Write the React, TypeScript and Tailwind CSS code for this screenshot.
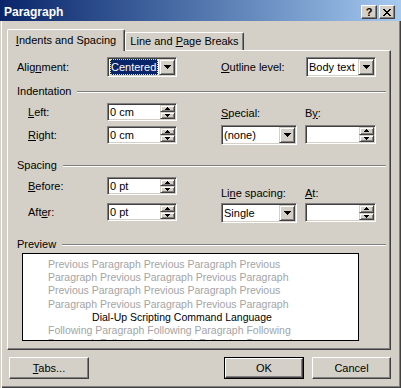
import type { ReactNode } from "react";

const sunken =
  "bg-white border border-t-[#808080] border-l-[#808080] border-r-white border-b-white shadow-[inset_1px_1px_0_#404040,inset_-1px_-1px_0_#d4d0c8]";
const raisedSmall =
  "bg-[#d4d0c8] border border-t-[#d4d0c8] border-l-[#d4d0c8] border-r-[#404040] border-b-[#404040] shadow-[inset_1px_1px_0_#ffffff,inset_-1px_-1px_0_#808080]";
const raisedBtn =
  "bg-[#d4d0c8] border border-t-white border-l-white border-r-[#404040] border-b-[#404040] shadow-[inset_-1px_-1px_0_#808080]";

function U({ children }: { children: ReactNode }) {
  return <span className="underline decoration-1 underline-offset-[1px]">{children}</span>;
}

function DownArrow() {
  return (
    <svg width="7" height="4" shapeRendering="crispEdges">
      <path d="M0 0H7V1H6V2H5V3H4V4H3V3H2V2H1V1H0Z" fill="#000" />
    </svg>
  );
}

function SmallArrow({ up }: { up?: boolean }) {
  return (
    <svg width="5" height="3" shapeRendering="crispEdges">
      {up ? (
        <path d="M2 0H3V1H4V2H5V3H0V2H1V1H2Z" fill="#000" />
      ) : (
        <path d="M0 0H5V1H4V2H3V3H2V2H1V1H0Z" fill="#000" />
      )}
    </svg>
  );
}

function Combo({ className, value, focused }: { className: string; value: string; focused?: boolean }) {
  return (
    <div className={`${sunken} flex p-[1px] ${className}`}>
      <div className="flex min-w-0 flex-1 items-center">
        {focused ? (
          <span className="mx-[1px] flex h-full flex-1 items-center border border-dotted border-[#e8e49c] bg-[#0a246a] text-white">
            {value}
          </span>
        ) : (
          <span className="pl-[1px]">{value}</span>
        )}
      </div>
      <div className={`${raisedSmall} flex w-[16px] items-center justify-center`}>
        <DownArrow />
      </div>
    </div>
  );
}

function Spin({ className, value }: { className: string; value: string }) {
  return (
    <div className={`${sunken} flex p-[1px] ${className}`}>
      <div className="flex flex-1 items-center pl-[1px]">{value}</div>
      <div className="flex w-[15px] flex-col">
        <div className={`${raisedSmall} flex flex-1 items-center justify-center`}>
          <SmallArrow up />
        </div>
        <div className={`${raisedSmall} flex flex-1 items-center justify-center`}>
          <SmallArrow />
        </div>
      </div>
    </div>
  );
}

function Header({ title, className }: { title: string; className: string }) {
  return (
    <div className={`mr-[4px] flex h-[13px] ${className}`}>
      <span className="self-center">{title}</span>
      <div className="ml-[6px] mt-[6px] h-[2px] flex-1 border-t border-b border-t-[#808080] border-b-white" />
    </div>
  );
}

const previewBefore = [
  "Previous Paragraph Previous Paragraph Previous",
  "Paragraph Previous Paragraph Previous Paragraph",
  "Previous Paragraph Previous Paragraph Previous",
  "Paragraph Previous Paragraph Previous Paragraph",
];
const previewAfter = [
  "Following Paragraph Following Paragraph Following",
  "Paragraph Following Paragraph Following Paragraph",
];

const closeGlyph =
  "M0 0h2v1h-2z M6 0h2v1h-2z M1 1h2v1h-2z M5 1h2v1h-2z M2 2h4v1h-4z M3 3h2v1h-2z M2 4h4v1h-4z M1 5h2v1h-2z M5 5h2v1h-2z M0 6h2v1h-2z M6 6h2v1h-2z";

export default function App() {
  return (
    <div className="h-[388px] w-[401px] overflow-hidden bg-[#d4d0c8] font-['Liberation_Sans',Arial,sans-serif] text-[11px] text-black shadow-[inset_1px_0_0_#d4d0c8,inset_2px_0_0_#ffffff,inset_-1px_-1px_0_#404040,inset_-2px_-2px_0_#808080]">
      {/* Title bar */}
      <div className="flex h-[21px] bg-linear-to-r from-[#0a246a] to-[#a6caf0] pr-[6px]">
        <span className="self-center pl-[4px] pt-[2px] text-[12px] font-bold text-white">Paragraph</span>
        <div className="ml-auto mt-[5px] flex h-[14px] gap-[2px]">
          <div className={`${raisedBtn} flex w-[16px] items-center justify-center text-[11px] leading-none font-bold`}>
            ?
          </div>
          <div className={`${raisedBtn} flex w-[16px] items-center justify-center`}>
            <svg width="8" height="7" shapeRendering="crispEdges">
              <path d={closeGlyph} fill="#000" />
            </svg>
          </div>
        </div>
      </div>

      {/* Tabs */}
      <div className="ml-[7px] mt-[8px] flex h-[21px] items-end">
        <div className="relative z-10 -mb-px flex h-[22px] w-[118px] items-center justify-center rounded-t-[2px] border-t border-l border-r border-t-white border-l-white border-r-[#404040] bg-[#d4d0c8] shadow-[inset_-1px_0_0_#808080]">
          <span>
            <U>I</U>ndents and Spacing
          </span>
        </div>
        <div className="flex h-[18px] w-[119px] items-center justify-center rounded-t-[2px] border-t border-l border-r border-t-white border-l-white border-r-[#404040] shadow-[inset_-1px_0_0_#808080]">
          <span>
            Line and <U>P</U>age Breaks
          </span>
        </div>
      </div>

      {/* Panel */}
      <div className="ml-[7px] h-[300px] w-[384px] border border-t-white border-l-white border-r-[#404040] border-b-[#404040] pl-[9px] shadow-[inset_-1px_-1px_0_#808080]">
        <div className="mt-[6px] flex h-[20px] items-center">
          <div className="flex w-[204px] items-center">
            <span className="w-[90px]">
              Alig<U>n</U>ment:
            </span>
            <Combo className="h-[20px] w-[70px]" value="Centered" focused />
          </div>
          <span className="w-[85px]">
            <U>O</U>utline level:
          </span>
          <Combo className="h-[20px] w-[70px]" value="Body text" />
        </div>

        <Header title="Indentation" className="mt-[8px]" />
        <div className="flex">
          <div className="flex w-[204px] flex-col">
            <div className="mt-[5px] flex items-center">
              <span className="w-[90px] pl-[11px]">
                <U>L</U>eft:
              </span>
              <Spin className="h-[18px] w-[70px]" value="0 cm" />
            </div>
            <div className="mt-[5px] flex items-center">
              <span className="w-[90px] pl-[11px]">
                <U>R</U>ight:
              </span>
              <Spin className="h-[18px] w-[70px]" value="0 cm" />
            </div>
          </div>
          <div className="flex flex-col">
            <div className="mt-[9px] flex h-[13px] items-center">
              <span className="w-[84px]">
                <U>S</U>pecial:
              </span>
              <span>
                B<U>y</U>:
              </span>
            </div>
            <div className="mt-[5px] flex gap-[8px]">
              <Combo className="h-[20px] w-[76px]" value="(none)" />
              <Spin className="h-[19px] w-[71px]" value="" />
            </div>
          </div>
        </div>

        <Header title="Spacing" className="mt-[14px]" />
        <div className="flex">
          <div className="flex w-[204px] flex-col">
            <div className="mt-[5px] flex items-center">
              <span className="w-[90px] pl-[11px]">
                <U>B</U>efore:
              </span>
              <Spin className="h-[18px] w-[70px]" value="0 pt" />
            </div>
            <div className="mt-[8px] flex items-center">
              <span className="w-[90px] pl-[11px]">
                Aft<U>e</U>r:
              </span>
              <Spin className="h-[18px] w-[70px]" value="0 pt" />
            </div>
          </div>
          <div className="flex flex-col">
            <div className="mt-[15px] flex h-[13px] items-center">
              <span className="w-[84px]">
                Li<U>n</U>e spacing:
              </span>
              <span>
                <U>A</U>t:
              </span>
            </div>
            <div className="mt-[3px] flex gap-[8px]">
              <Combo className="h-[20px] w-[76px]" value="Single" />
              <Spin className="h-[19px] w-[71px]" value="" />
            </div>
          </div>
        </div>

        <Header title="Preview" className="mt-[15px]" />
        <div className="ml-[5px] mt-[2px] h-[88px] w-[337px] overflow-hidden border border-black bg-white">
          <div className="ml-[25px] w-[268px] whitespace-nowrap pt-[4px] text-[10.5px] leading-[13.2px]">
            {previewBefore.map((l, i) => (
              <div key={i} className="text-[#a4a4a4]">
                {l}
              </div>
            ))}
            <div className="text-center text-black">Dial-Up Scripting Command Language</div>
            {previewAfter.map((l, i) => (
              <div key={i} className="text-[#a4a4a4]">
                {l}
              </div>
            ))}
          </div>
        </div>
      </div>

      {/* Buttons */}
      <div className="mt-[7px] flex">
        <div className={`${raisedBtn} ml-[9px] flex h-[22px] w-[80px] items-center justify-center`}>
          <span>
            <U>T</U>abs...
          </span>
        </div>
        <div className="ml-[135px] h-[22px] w-[80px] border border-black">
          <div className={`${raisedBtn} flex h-full items-center justify-center`}>OK</div>
        </div>
        <div className={`${raisedBtn} ml-[8px] flex h-[22px] w-[79px] items-center justify-center`}>Cancel</div>
      </div>
    </div>
  );
}
